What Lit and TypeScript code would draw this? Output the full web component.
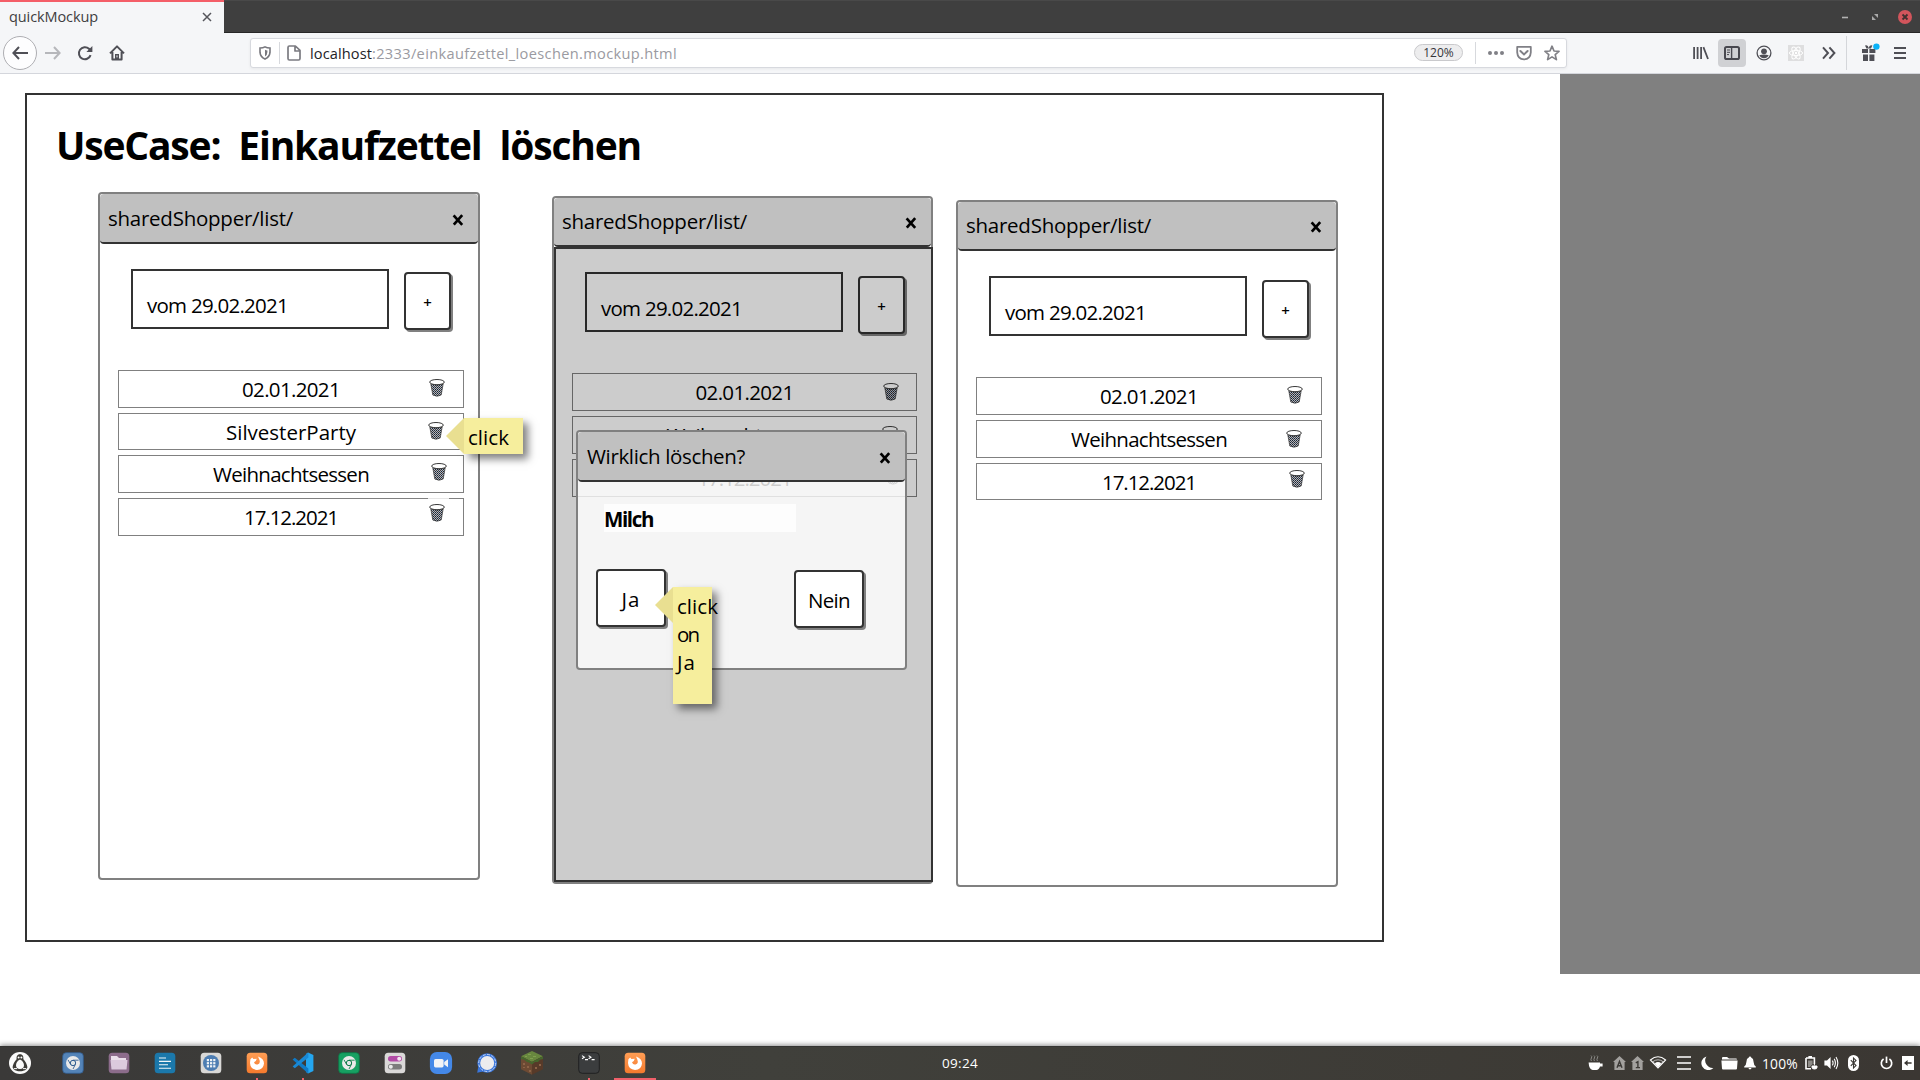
import { LitElement, html, css, svg, nothing } from "lit";
import { customElement, property } from "lit/decorators.js";

/** A single line of text whose tracking is adjusted to fill a given width. */
@customElement("fit-text")
class FitText extends LitElement {
  @property({ type: Number }) w = 0;
  static styles = css`
    :host { display: inline-block; white-space: nowrap; }
    .run { display: inline-block; white-space: nowrap; }
  `;
  render() {
    return html`<span class="run"><slot></slot></span>`;
  }
  firstUpdated() {
    const run = this.renderRoot.querySelector(".run") as HTMLElement;
    const n = (this.textContent || "").trim().length;
    const natural = run.getBoundingClientRect().width;
    if (n > 0 && this.w) {
      run.style.letterSpacing = `${(this.w - natural) / n}px`;
    }
  }
}

const trashIcon = html`<svg class="trash-svg" width="16" height="18" viewBox="0 0 16 18">
  <defs>
    <pattern id="mesh" width="2" height="2" patternUnits="userSpaceOnUse">
      <rect width="2" height="2" fill="#a9b6c6"></rect>
      <rect width="1" height="1" fill="#20242c"></rect>
      <rect x="1" y="1" width="1" height="1" fill="#4a3f3b"></rect>
    </pattern>
  </defs>
  <path d="M1.8 4.8L3.8 16Q8 18.4 12.2 16L14.2 4.8Q8 7.4 1.8 4.8Z" fill="url(#mesh)" stroke="#333" stroke-width=".7"></path>
  <ellipse cx="8" cy="3.1" rx="7.3" ry="2.6" fill="#fff" stroke="#222" stroke-width=".9"></ellipse>
</svg>`;

const closeIcon = html`<svg width="12" height="12" viewBox="0 0 12 12">
  <path d="M1.6 1.4L10.2 10.8M10.2 1.2L1.8 10.6" stroke="#000" stroke-width="2.7" fill="none"></path>
</svg>`;

interface Row { label: string; w: number; h: number; tx: number; ty: number; notch?: boolean; }

@customElement("mock-window")
class MockWindow extends LitElement {
  @property() variant = "";
  @property({ attribute: false }) rows: Row[] = [];
  @property({ type: Boolean }) dimmed = false;

  static styles = css`
    :host { display: block; box-sizing: border-box; border: 2px solid #808080; border-radius: 4px; background: #fff; position: relative; font: 20.5px/24px "Open Sans", sans-serif; color: #000; --nudge: 4px; --head: 49px; --lift: 2px; }
    :host([variant="first"]) { --nudge: 3px; --head: 50px; --lift: 0px; }
    .head { box-sizing: border-box; height: var(--head); border-bottom: 2px solid #333; border-radius: 4px; background: #c0c0c0; display: flex; align-items: center; justify-content: space-between; padding: 0 14px var(--lift) 8px; }
    .head svg { margin-top: 4px; }
    .entry { display: flex; align-items: flex-start; gap: 16px; padding: 25px 0 41px 31px; }
    .field { box-sizing: border-box; width: 258px; height: 60px; border: 2px solid #333; padding: 22px 0 0 14px; }
    .add { box-sizing: border-box; width: 47px; height: 58px; margin: var(--nudge) 0 -5px -1px; border: 2px solid #333; border-radius: 4px; box-shadow: 2px 2px 0 #808080; background: #fff; display: flex; align-items: center; justify-content: center; font-size: 15px; font-weight: 600; padding-top: 1px; }
    .list { display: flex; flex-direction: column; gap: 5px; padding: 0 14px 0 18px; }
    .row { box-sizing: border-box; position: relative; border: 1px solid #808080; display: flex; align-items: center; justify-content: center; }
    .bin { position: absolute; width: 16px; height: 18px; }
    .bin svg { display: block; }
    .notch::before { content: ""; position: absolute; right: 14px; top: -1px; width: 21px; height: 1px; background: #e6e6e6; }
    .shade { position: absolute; left: 0; right: -2px; top: 49px; bottom: 0; border: 2px solid #333; background: rgba(0, 0, 0, 0.2); }
  `;

  render() {
    return html`
      <div class="head"><fit-text w="185">sharedShopper/list/</fit-text>${closeIcon}</div>
      <div class="entry">
        <div class="field"><fit-text w="141">vom 29.02.2021</fit-text></div>
        <div class="add">+</div>
      </div>
      <div class="list">
        ${this.rows.map(r => html`
          <div class="row ${r.notch ? "notch" : ""}" style="height:${r.h}px">
            <fit-text w=${r.w}>${r.label}</fit-text>
            <span class="bin" style="left:${r.tx}px;top:${r.ty}px">${trashIcon}</span>
          </div>`)}
      </div>
      ${this.dimmed ? html`<div class="shade"></div>` : nothing}
    `;
  }
}

const tile = (inner: unknown) => html`<svg width="24" height="24" viewBox="0 0 24 24">${inner}</svg>`;
const chromium = (bg: string, edge: string) => svg`
  <rect x="1.7" y="1.7" width="20.6" height="20.6" rx="3.5" fill=${bg} stroke=${edge} stroke-width=".8"/>
  <circle cx="12" cy="12" r="7" fill="#e9e9e9"/>
  <circle cx="12" cy="12" r="2.7" fill="#dfe5e5" stroke=${edge} stroke-width="1"/>
  <path d="M12 9.2h5.6M9.6 13.4L7 8.8M14.4 13.4L12 18" stroke=${edge} stroke-width=".9" fill="none"/>`;
const firefox = svg`
  <defs><linearGradient id="ff" x1="0" y1="0" x2="0" y2="1"><stop offset="0" stop-color="#ff9e55"/><stop offset="1" stop-color="#f57a2d"/></linearGradient></defs>
  <rect x="1.7" y="1.7" width="20.6" height="20.6" rx="3.5" fill="url(#ff)"/>
  <path d="M5.4 8.2L7.2 6.6L8.4 8L11.8 7.8L10.8 10L9 11.2Q10 14 12.6 13.4Q16 12.4 14.2 8.2L13 5.4Q19 7.4 19 12.4Q18.4 18.8 12 19Q5.4 18.4 5 12Z" fill="#fff"/>`;

const apps = [
  { icon: tile(svg`<circle cx="12" cy="12" r="11" fill="#fafafa"/><path d="M12 3.2C9 3.2 8.4 5.6 8.6 8.2C6.6 10.6 4.8 13.4 4.6 16.2C5 18.6 8 20.2 12 20.2S19 18.6 19.4 16.2C19.2 13.4 17.4 10.6 15.4 8.2C15.6 5.6 15 3.2 12 3.2Z" fill="#3c3b37"/><path d="M12 8.6Q8.4 10.4 8 14Q8 18 12 18T16 14Q15.6 10.4 12 8.6Z" fill="#fafafa"/><circle cx="10.6" cy="6.6" r="1" fill="#fff"/><circle cx="13.4" cy="6.6" r="1" fill="#fff"/><path d="M5.8 17.6h3.2M15 17.6h3.2" stroke="#fafafa" stroke-width="1"/>`), run: "" },
  { icon: tile(chromium("#5484b8", "#315d91")), run: "" },
  { icon: tile(svg`<rect x="1.7" y="1.7" width="20.6" height="20.6" rx="3.5" fill="#8c6c8b"/><path d="M4 5h6l2 2h7v3H4Z" fill="#eadfea"/><path d="M3.5 9h17l-1 9.6h-15Z" fill="#dccadd"/>`), run: "" },
  { icon: tile(svg`<rect x="1.7" y="1.7" width="20.6" height="20.6" rx="3.5" fill="#1b78ab"/><path d="M6 7h7M6 10.4h12M6 13.8h9M6 17.2h12" stroke="#f2f6f8" stroke-width="1.1"/>`), run: "" },
  { icon: tile(svg`<rect x="1.7" y="1.7" width="20.6" height="20.6" rx="3.5" fill="#d9d8d6"/><circle cx="12" cy="12" r="8" fill="#4d7db2"/><g fill="#eef2f6"><rect x="7.8" y="8" width="2.2" height="2.2"/><rect x="11" y="8" width="2.2" height="2.2"/><rect x="14.2" y="8" width="2.2" height="2.2"/><rect x="7.8" y="11.1" width="2.2" height="2.2"/><rect x="11" y="11.1" width="2.2" height="2.2"/><rect x="14.2" y="11.1" width="2.2" height="2.2"/><rect x="7.8" y="14.2" width="2.2" height="2.2"/><rect x="11" y="14.2" width="2.2" height="2.2"/><rect x="14.2" y="14.2" width="2.2" height="2.2"/></g>`), run: "" },
  { icon: tile(firefox), run: "dot" },
  { icon: tile(svg`<path d="M17 1.5L22.4 4V20L17 22.4L15 21V3Z" fill="#24a6f0"/><path d="M1.6 8.6L3.8 6.8L17.4 17.6V22.2L16 21.6Z" fill="#0f7ac7"/><path d="M1.6 15.4L3.8 17.2L17.4 6.4V1.8L16 2.4Z" fill="#1988d4"/>`), run: "dot" },
  { icon: tile(chromium("#17a062", "#0a7a47")), run: "" },
  { icon: tile(svg`<rect x="1.7" y="1.7" width="20.6" height="20.6" rx="3.5" fill="#dad9d8"/><rect x="5" y="5" width="14" height="5.4" rx="2.7" fill="#b14ba5"/><circle cx="16.2" cy="7.7" r="2" fill="#f4e4f2"/><rect x="5" y="13" width="14" height="5.4" rx="2.7" fill="#7c7c7c"/><circle cx="7.8" cy="15.7" r="2" fill="#e9e9e9"/>`), run: "" },
  { icon: tile(svg`<rect x=".9" y=".9" width="22.2" height="22.2" rx="7" fill="#4488e8"/><rect x="5" y="8" width="9.6" height="8.4" rx="1.6" fill="#f2f3f6"/><path d="M15.2 11L19 8.2V16.2L15.2 13.4Z" fill="#f2f3f6"/>`), run: "" },
  { icon: tile(svg`<circle cx="12.2" cy="12" r="9.8" fill="#3a76dc"/><path d="M2.2 21.8L3.2 16L8 20.4Z" fill="#3a76dc"/><circle cx="12.2" cy="12" r="8.5" fill="none" stroke="#e6ebf5" stroke-width=".8" stroke-dasharray="3 1.4"/><circle cx="12.2" cy="12" r="7" fill="#ececee"/>`), run: "" },
  { icon: tile(svg`<path d="M12 0L23 5.2L12 11L1 5.2Z" fill="#68873f"/><path d="M1 5.2L12 11V23.8L1 18.2Z" fill="#6d4a33"/><path d="M23 5.2L12 11V23.8L23 18.2Z" fill="#573a29"/><path d="M1 5.2L12 11L23 5.2V8L20 8.8L18 11L15 11L12 13.6L9 11.6L7 11L4 8.8L1 8Z" fill="#45662d"/><path d="M3 12h2v2h-2zM7 15h2v2h-2zM9 19h2v2h-2zM15 16h2v2h-2zM19 13h2v2h-2zM3 16h2v1h-2z" fill="#8c6347"/><path d="M8 3h3v1h-3zM13 5h3v1h-3zM10 7h3v1h-3zM5 5h2v1h-2z" fill="#7fa04e"/>`), run: "" },
  { icon: tile(svg`<rect x="1.7" y="1.7" width="20.6" height="20.6" rx="3.5" fill="#3b3d3e" stroke="#202122"/><path d="M5 4.6L7.4 6.2L5 7.8M11.6 4.6L14 6.2L11.6 7.8" fill="none" stroke="#fff" stroke-width="1.1"/><path d="M8 8.6h3M14.6 8.6h3" stroke="#fff" stroke-width="1.1"/>`), run: "dot" },
  { icon: tile(firefox), run: "bar" },
];

@customElement("app-root")
class AppRoot extends LitElement {
  static styles = css`
    :host { display: flex; flex-direction: column; width: 1920px; height: 1080px; overflow: hidden; background: #fff; font-family: "Open Sans", "Noto Sans", sans-serif; color: #3e3d40; }
    svg { display: block; }
    * { box-sizing: border-box; }

    .titlebar { height: 33px; background: #3f3f3f; border-top: 1px solid #494949; border-bottom: 1px solid #272727; display: flex; justify-content: space-between; }
    .tab { width: 224px; height: 33px; margin-top: -1px; background: #f5f6f8; border-top: 2px solid #f45e68; display: flex; align-items: center; justify-content: space-between; padding: 0 12px 1px 9px; font-size: 14.5px; line-height: 20px; }
    .winbtns { display: grid; grid-template-columns: 30px 27px 22px; align-items: center; width: 79px; }

    .toolbar { height: 41px; background: #f5f6f8; border-bottom: 1px solid #d4d6dc; display: flex; align-items: center; }
    .nav { display: grid; grid-template-columns: 34px 16px 16px 16px; align-items: center; padding-left: 3px; column-gap: 8px; width: 250px; }
    .nav svg:nth-child(3) { margin-left: 8px; }
    .nav svg:nth-child(4) { margin-left: 16px; }
    .back { width: 34px; height: 34px; border: 1px solid #aeaeb2; border-radius: 50%; background: #fdfdfe; display: flex; align-items: center; justify-content: center; }
    .url { width: 1317px; height: 30px; margin-top: -1px; background: #fff; border: 1px solid #d7d9de; border-radius: 3px; box-shadow: 0 1px 3px rgba(0, 0, 0, 0.06); display: flex; align-items: center; padding-left: 8px; font-size: 14.6px; line-height: 20px; color: #9a9aa1; }
    .url .sep { width: 1px; height: 22px; background: #d7d9dd; }
    .url .shield { margin-right: 8px; }
    .url .page { margin: 0 9px 0 7px; }
    .url .host { color: #232327; }
    .url .actions { margin-left: auto; display: grid; grid-template-columns: 49px 1px 16px 16px 16px; column-gap: 12px; align-items: center; padding-right: 6px; }
    .zoom { width: 49px; height: 17px; border: 1px solid #c9c9cc; border-radius: 9px; background: #ededee; color: #35353a; font-size: 12px; line-height: 15px; text-align: center; }
    .tools { display: grid; grid-template-columns: 26px 37px 32px 33px 26px 13px 34px 16px; align-items: center; margin-left: 126px; width: 226px; }
    .active { width: 28px; height: 28px; border-radius: 4px; background: #d0d1d4; display: flex; align-items: center; justify-content: center; }
    .tools .active { margin-left: -1px; }
    .tools .sep { width: 1px; height: 34px; margin-left: -1px; background: #d4d6da; }

    .view { flex: 1; display: flex; align-items: flex-start; }
    .doc { width: 1560px; padding: 19px 0 0 25px; }
    .side { width: 360px; height: 900px; background: #808080; }
    .frame { position: relative; width: 1359px; height: 849px; border: 2px solid #333; padding: 20px 0 0 29px; color: #000; background: #fff; font: 20.5px/24px "Open Sans", sans-serif; }
    h1 { margin: 0; font-size: 39px; line-height: 60px; font-weight: 700; word-spacing: 9px; }
    mock-window, .modal, .note { position: absolute; }
    .w1 { left: 71px; top: 97px; width: 382px; height: 688px; }
    .w2 { left: 525px; top: 101px; width: 381px; height: 688px; }
    .w3 { left: 929px; top: 105px; width: 382px; height: 687px; }

    .modal { left: 549px; top: 335px; width: 331px; height: 240px; border: 2px solid #808080; border-radius: 4px; background: rgba(255, 255, 255, 0.8); }
    .mhead { height: 50px; background: #c0c0c0; border-bottom: 2px solid #333; border-radius: 4px; display: flex; align-items: center; justify-content: space-between; padding: 0 14px 0 9px; }
    .mhead svg { margin-top: 3px; }
    .item { width: 192px; height: 28px; margin: 22px 0 0 26px; background: #fdfdfd; padding: 3px 0 0 0; font-weight: 700; }
    .choices { display: flex; gap: 128px; padding: 37px 0 0 18px; align-items: flex-start; }
    .btn { width: 70px; height: 58px; background: #fff; border: 2px solid #333; border-radius: 4px; box-shadow: 2px 2px 0 #808080; display: flex; align-items: center; justify-content: center; padding-top: 2px; }
    .btn.no { margin-top: 1px; }

    .note { background: #f6ee9d; box-shadow: 5px 5px 8px rgba(0, 0, 0, 0.5); padding-left: 4px; line-height: 28px; }
    .note::before { content: ""; position: absolute; left: -18px; top: 0; border: 18px solid transparent; border-left: 0; border-right-color: #e9df91; }
    .n1 { left: 437px; top: 323px; width: 59px; height: 36px; padding-top: 5px; }
    .n2 { left: 646px; top: 492px; width: 39px; height: 117px; padding-top: 5px; }
    .n2 fit-text { display: block; }

    .panel { position: relative; height: 34px; background: linear-gradient(90deg, #3a3938, #40403b 40%, #3c3934 90%, #3b3733); box-shadow: 0 -1px 5px rgba(0, 0, 0, 0.45); display: flex; justify-content: space-between; color: #fff; border-top: 1px solid #353533; }
    .apps { display: grid; grid-template-columns: 53px repeat(9, 46px) 45px 57px 46px 46px; padding-left: 8px; width: 680px; }
    .app { height: 33px; padding-top: 4px; position: relative; }
    .dot::after, .bar::after { content: ""; position: absolute; bottom: 0; height: 2px; background: #f0606a; }
    .dot::after { left: 11px; width: 2px; }
    .bar::after { left: -9px; width: 42px; }
    .clock { font-size: 13.5px; line-height: 32px; }
    .tray { display: grid; grid-template-columns: 25px 18px 18px 28px 24px 20px 23px 18px 43px 19px 24px 32px 22px 18px; align-items: center; width: 680px; padding: 0 0 1px 348px; font-size: 13.8px; }
  `;

  render() {
    const g = "#4f4f56";
    return html`
      <div class="titlebar">
        <div class="tab"><fit-text w="89">quickMockup</fit-text>
          <svg width="10" height="10" viewBox="0 0 10 10"><path d="M1 1L9 9M9 1L1 9" stroke="#55555b" stroke-width="1.5"/></svg></div>
        <div class="winbtns">
          <svg width="8" height="8" viewBox="0 0 8 8"><path d="M1 4.5h6" stroke="#b2b2b2" stroke-width="1.6"/></svg>
          <svg width="8" height="8" viewBox="0 0 8 8"><path d="M3 1H7V5ZM1 3V7H5Z" fill="#a9a9a9"/></svg>
          <svg width="14" height="14" viewBox="0 0 14 14"><circle cx="7" cy="7" r="7" fill="#d2555c"/><path d="M4.5 4.5l5 5M9.5 4.5l-5 5" stroke="#40302f" stroke-width="1.8"/></svg>
        </div>
      </div>

      <div class="toolbar">
        <div class="nav">
          <div class="back"><svg width="16" height="14" viewBox="0 0 16 14"><path d="M7 1L1.4 7L7 13M1.4 7H16" fill="none" stroke=${g} stroke-width="2"/></svg></div>
          <svg width="16" height="14" viewBox="0 0 16 14"><path d="M9 1L14.6 7L9 13M14.6 7H0" fill="none" stroke="#b6b7bb" stroke-width="2"/></svg>
          <svg width="16" height="16" viewBox="0 0 16 16"><path d="M13.6 10.2A6 6 0 1 1 12 3.8L14 6" fill="none" stroke=${g} stroke-width="2"/><path d="M15.4 1V7H9.4Z" fill=${g}/></svg>
          <svg width="16" height="16" viewBox="0 0 16 16"><path d="M1 8.4L8 1.4L15 8.4M3.4 7V14.4H12.6V7" fill="none" stroke=${g} stroke-width="2" stroke-linejoin="round"/><path d="M6 9h4v6H6Z" fill=${g}/><path d="M8 10.4v2" stroke="#f5f6f8"/></svg>
        </div>
        <div class="url">
          <svg class="shield" width="12" height="14" viewBox="0 0 12 14"><path d="M1 2Q4 2 6 .9Q8 2 11 2V6.4Q10.6 11 6 13.1Q1.4 11 1 6.4Z" fill="none" stroke="#77777d" stroke-width="1.6"/><path d="M6 3.8V10.4Q8.4 9 8.4 6V4.4Q7 4.4 6 3.8Z" fill="#77777d"/></svg>
          <span class="sep"></span>
          <svg class="page" width="14" height="16" viewBox="0 0 14 16"><path d="M1 2.4Q1 1 2.4 1H8.4L13 5.4V13.6Q13 15 11.6 15H2.4Q1 15 1 13.6ZM8 1V6H13" fill="none" stroke="#7b7b81" stroke-width="1.7" stroke-linejoin="round"/></svg>
          <fit-text w="62" class="host">localhost</fit-text><fit-text w="305">:2333/einkaufzettel_loeschen.mockup.html</fit-text>
          <div class="actions">
            <div class="zoom">120%</div>
            <span class="sep"></span>
            <svg width="16" height="16" viewBox="0 0 16 16" fill="#808086"><circle cx="2" cy="8" r="2"/><circle cx="8" cy="8" r="2"/><circle cx="14" cy="8" r="2"/></svg>
            <svg width="16" height="16" viewBox="0 0 16 16" fill="none" stroke="#808086"><path d="M1.2 1.8H14.8V7.4Q14.4 14 8 14.4Q1.6 14 1.2 7.4Z" stroke-width="1.8" stroke-linejoin="round"/><path d="M4.4 6L8 9.4L11.6 6" stroke-width="2" stroke-linecap="round"/></svg>
            <svg width="16" height="16" viewBox="0 0 16 16"><path d="M8 1.2L10 6L15 6.4L11.2 9.6L12.4 14.6L8 11.9L3.6 14.6L4.8 9.6L1 6.4L6 6Z" fill="none" stroke="#808086" stroke-width="1.7" stroke-linejoin="round"/></svg>
          </div>
        </div>
        <div class="tools">
          <svg width="16" height="14" viewBox="0 0 16 14"><path d="M1.1 1V13M4.6 1V13M8.1 1V13M10.4 1.2L15 13" stroke=${g} stroke-width="1.8"/></svg>
          <div class="active"><svg width="16" height="14" viewBox="0 0 16 14"><rect x="1" y="1" width="14" height="12" rx="1.6" fill="none" stroke="#48484f" stroke-width="2"/><path d="M7.6 1V13" stroke="#48484f" stroke-width="1.4"/><path d="M3 4h3M3 6.3h3M3 8.6h2" stroke="#48484f"/></svg></div>
          <svg width="16" height="16" viewBox="0 0 16 16"><circle cx="8" cy="8" r="6.9" fill="none" stroke=${g} stroke-width="1.3"/><circle cx="8" cy="6.3" r="2.9" fill=${g}/><path d="M3.3 10.2Q8 9 12.7 10.2Q11.2 13.2 8 13.2T3.3 10.2Z" fill=${g}/></svg>
          <svg width="16" height="16" viewBox="0 0 16 16"><rect width="16" height="16" fill="#dededf"/><g fill="none" stroke="#fff"><ellipse cx="8" cy="8" rx="6.6" ry="2.6"/><ellipse cx="8" cy="8" rx="6.6" ry="2.6" transform="rotate(60 8 8)"/><ellipse cx="8" cy="8" rx="6.6" ry="2.6" transform="rotate(120 8 8)"/></g><circle cx="8" cy="8" r="1.2" fill="#fff"/></svg>
          <svg width="16" height="14" viewBox="0 0 16 14"><path d="M2 1.4L7 7L2 12.6M8.4 1.4L13.4 7L8.4 12.6" fill="none" stroke=${g} stroke-width="2"/></svg>
          <span class="sep"></span>
          <svg width="20" height="20" viewBox="0 0 20 20"><path d="M2 6h6v4H2ZM9.4 6h6v4h-6ZM3 11.4h5V18H3ZM9.4 11.4h5V18h-5Z" fill=${g}/><path d="M5 2.6Q8 1.4 8.7 5Q9.4 1.4 12.4 2.6L11 5.4H6.4Z" fill=${g}/><circle cx="16.4" cy="3.6" r="3.2" fill="#0ab2f8"/></svg>
          <svg width="12" height="14" viewBox="0 0 12 14"><path d="M0 2h12M0 7h12M0 12h12" stroke=${g} stroke-width="1.9"/></svg>
        </div>
      </div>

      <div class="view">
        <div class="doc">
          <div class="frame">
            <h1><fit-text w="585">UseCase: Einkaufzettel löschen</fit-text></h1>
            <mock-window class="w1" variant="first" .rows=${[
              { label: "02.01.2021", w: 98, h: 38, tx: 310, ty: 8 },
              { label: "SilvesterParty", w: 130, h: 37, tx: 309, ty: 8 },
              { label: "Weihnachtsessen", w: 156, h: 38, tx: 312, ty: 7 },
              { label: "17.12.2021", w: 94, h: 38, tx: 310, ty: 5, notch: true },
            ]}></mock-window>
            <mock-window class="w2" dimmed .rows=${[
              { label: "02.01.2021", w: 98, h: 38, tx: 310, ty: 9 },
              { label: "Weihnachtsessen", w: 156, h: 38, tx: 309, ty: 9 },
              { label: "17.12.2021", w: 94, h: 38, tx: 312, ty: 7 },
            ]}></mock-window>
            <mock-window class="w3" .rows=${[
              { label: "02.01.2021", w: 98, h: 38, tx: 310, ty: 8 },
              { label: "Weihnachtsessen", w: 156, h: 38, tx: 309, ty: 9 },
              { label: "17.12.2021", w: 94, h: 37, tx: 312, ty: 6 },
            ]}></mock-window>
            <div class="modal">
              <div class="mhead"><fit-text w="158">Wirklich löschen?</fit-text>${closeIcon}</div>
              <div class="item"><fit-text w="49">Milch</fit-text></div>
              <div class="choices">
                <div class="btn"><fit-text w="19">Ja</fit-text></div>
                <div class="btn no"><fit-text w="42">Nein</fit-text></div>
              </div>
            </div>
            <div class="note n1"><fit-text w="41">click</fit-text></div>
            <div class="note n2"><fit-text w="41">click</fit-text><fit-text w="21">on</fit-text><fit-text w="19">Ja</fit-text></div>
          </div>
        </div>
        <div class="side"></div>
      </div>

      <div class="panel">
        <div class="apps">${apps.map(a => html`<div class="app ${a.run}">${a.icon}</div>`)}</div>
        <div class="clock"><fit-text w="36">09:24</fit-text></div>
        <div class="tray">
          <svg width="16" height="16" viewBox="0 0 16 16"><path d="M.6 7.6H12V8.4H14.6V11.6H12Q11 15 8.4 15H4.6Q1 14.4 .6 7.6Z" fill="#fff"/><path d="M3.4 6Q2.4 4.6 3.4 3T3 .6M6.4 6Q5.4 4.6 6.4 3T6 .6M9.4 6Q8.4 4.6 9.4 3T9 .6" fill="none" stroke="#8b8a87"/></svg>
          <svg width="13" height="14" viewBox="0 0 13 14"><path d="M6.5 0L13 6H11.6V14H1.4V6H0Z" fill="#a3a19e"/><path d="M4 11.8L6.5 5.4L9 11.8M4.8 9.8h3.4" fill="none" stroke="#3c3a36" stroke-width="1.4"/></svg>
          <svg width="13" height="14" viewBox="0 0 13 14"><path d="M6.5 0L13 6H11.6V14H1.4V6H0Z" fill="#a3a19e"/><path d="M4.8 6.8L6.9 5.6V11.6M4.8 11.6H9" fill="none" stroke="#3c3a36" stroke-width="1.4"/></svg>
          <svg width="18" height="14" viewBox="0 0 18 14"><path d="M1.4 4Q9 -2.4 16.6 4L9 12Z" fill="none" stroke="#fff" stroke-width="1.1"/><path d="M4 5.6Q9 2 14 5.6L9 11.4Z" fill="none" stroke="#ddd" stroke-width=".8"/><path d="M5.8 7.2Q9 4.8 12.2 7.2L9 11.4Z" fill="#fff"/></svg>
          <svg width="14" height="14" viewBox="0 0 14 14"><path d="M0 1h14M0 7h14M0 13h14" stroke="#fff" stroke-width="1.7"/></svg>
          <svg width="13" height="14" viewBox="0 0 13 14"><path d="M5.4 .4A7 7 0 1 0 12.4 12A7.6 7.6 0 0 1 5.4 .4Z" fill="#fff"/></svg>
          <svg width="17" height="14" viewBox="0 0 17 14"><path d="M1 2Q1 1 2 1H6L8 2.4H15Q16 2.4 16 3.4H1Z" fill="#fff"/><path d="M.4 4.4H16.6L16 12.4Q16 13.4 15 13.4H2Q1 13.4 1 12.4Z" fill="#fff"/></svg>
          <svg width="12" height="14" viewBox="0 0 12 14"><path d="M6 .4Q7.2 .4 7.2 1.6Q9.6 2.6 9.6 6Q9.8 9.4 11.8 10.6V11.4H.2V10.6Q2.2 9.4 2.4 6Q2.4 2.6 4.8 1.6Q4.8 .4 6 .4ZM4.4 12h3.2Q7 13.4 6 13.4T4.4 12Z" fill="#fff"/></svg>
          <fit-text w="36">100%</fit-text>
          <svg width="13" height="14" viewBox="0 0 13 14"><path d="M1 2H9.4V8M6 12.8H1V2M3.4 .6h3.6" fill="none" stroke="#fff" stroke-width="1.6"/><path d="M3 4.4H7.6V8L5 11H3Z" fill="#8d8b87"/><path d="M9.4 7v2.4M7 10h5V11.4Q12 13 9.5 13T7 11.4Z" fill="#fff" stroke="#fff"/></svg>
          <svg width="15" height="14" viewBox="0 0 15 14"><path d="M.4 4.6H3L6.6 1V13L3 9.4H.4Z" fill="#fff"/><path d="M8.4 4.6Q9.8 7 8.4 9.4M10.2 2.8Q12.6 7 10.2 11.2M12 1Q15.6 7 12 13" fill="none" stroke="#fff" stroke-width="1.1"/></svg>
          <svg width="11" height="16" viewBox="0 0 11 16"><rect width="11" height="16" rx="5.5" fill="#fff"/><path d="M2.8 5.2L8 10.6L5.5 13V3L8 5.4L2.8 10.8" fill="none" stroke="#3a3834" stroke-width="1.1"/></svg>
          <svg width="13" height="14" viewBox="0 0 13 14"><path d="M3.6 3A5.2 5.2 0 1 0 9.4 3" fill="none" stroke="#fff" stroke-width="1.7"/><path d="M6.5 .6V7" stroke="#fff" stroke-width="1.7"/></svg>
          <svg width="12" height="14" viewBox="0 0 12 14"><path d="M0 0H12V14H0Z" fill="#fff"/><path d="M2 7L5.6 4V6.2H9.6V7.8H5.6V10Z" fill="#3a3733"/></svg>
        </div>
      </div>
    `;
  }
}
